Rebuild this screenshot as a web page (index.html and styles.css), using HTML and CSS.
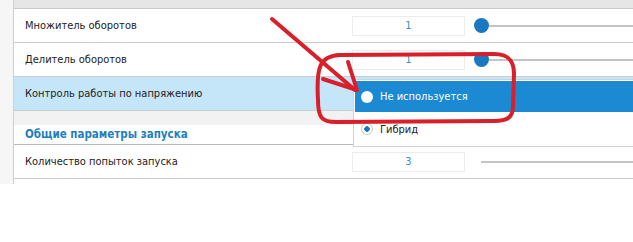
FILE: index.html
```html
<!DOCTYPE html>
<html lang="ru">
<head>
    <meta charset="UTF-8">
    <title>Параметры</title>
    <link rel="stylesheet" href="styles.css">
</head>
<body>

<div class="panel">
    <div class="gutter"></div>

    <div class="params">
        <div class="top-bar"></div>

        <div class="row">
            <div class="label">Множитель оборотов</div>
            <div class="value">1</div>
            <div class="slider"><span class="knob"></span><span class="track"></span></div>
        </div>

        <div class="row">
            <div class="label">Делитель оборотов</div>
            <div class="value">1</div>
            <div class="slider"><span class="knob"></span><span class="track"></span></div>
        </div>

        <div class="row row-active">
            <div class="label">Контроль работы по напряжению</div>
        </div>

        <div class="spacer"></div>

        <div class="group-title">Общие параметры запуска</div>

        <div class="row">
            <div class="label">Количество попыток запуска</div>
            <div class="value">3</div>
            <div class="slider slider-empty"><span class="track"></span></div>
        </div>
    </div>

    <!-- Выпадающий список для "Контроль работы по напряжению" -->
    <div class="dropdown">
        <div class="option selected"><span class="radio"></span>Не используется</div>
        <div class="option"><span class="radio checked"></span>Гибрид</div>
    </div>

    <!-- Красная пометка поверх скриншота -->
    <svg class="markup" width="633" height="242" viewBox="0 0 633 242">
        <path d="M 272 19 L 355 90" />
        <path d="M 348 62 L 357 90 L 323 79" />
        <path d="M 318 100 C 316 66, 320 56, 340 55 L 494 54 C 508 54, 514 60, 514 74 L 513 106 C 513 117, 508 121, 494 121 L 336 122 C 322 122, 318 118, 318 100 Z" />
    </svg>
</div>

</body>
</html>
```

FILE: styles.css
```css
body {
    margin: 0;
    background-color: #fff;
    font-family: 'DejaVu Sans Condensed', 'DejaVu Sans', sans-serif;
    font-size: 11px;
    color: #222;
}

.panel {
    position: relative;
    display: flex;
    height: 184px;
    overflow: hidden;
}

.gutter {
    width: 13px;
    flex-shrink: 0;
    background-color: #f6f6f6;
    border-right: 1px solid #cfcfcf;
}

.params {
    flex: 1;
    align-self: flex-start;
}

.top-bar {
    height: 8px;
    background-color: #e6e6e6;
    border-bottom: 1px solid #c9c9c9;
}

.row {
    display: grid;
    grid-template-columns: 338px 113px 1fr;
    align-items: center;
    height: 33px;
    border-bottom: 1px solid #cccccc;
}

.row-active {
    background-color: #c5e6f9;
}

.label {
    padding-left: 11px;
}

.value {
    height: 18px;
    line-height: 18px;
    border: 1px solid #ececec;
    text-align: center;
    color: #3b8bcb;
}

.slider {
    display: flex;
    align-items: center;
    padding-left: 9px;
}

.slider-empty {
    padding-left: 16px;
}

.knob {
    width: 15px;
    height: 15px;
    border-radius: 50%;
    background-color: #1a78c2;
    flex-shrink: 0;
}

.track {
    flex: 1;
    height: 2px;
    background-color: #c4c4c4;
}

.spacer {
    height: 14px;
    background-color: #f2f2f2;
}

.group-title {
    height: 19px;
    line-height: 19px;
    padding-left: 11px;
    font-size: 11.5px;
    font-weight: bold;
    color: #1d7fc2;
    border-bottom: 1px solid #b8b8b8;
}

.dropdown {
    position: absolute;
    left: 353px;
    top: 79px;
    width: 300px;
    padding: 1px 0 0 1px;
    background-color: #fff;
    border: 1px solid #d2d2d2;
}

.option {
    display: flex;
    align-items: center;
    gap: 7px;
    height: 34px;
    padding-left: 6px;
}

.option.selected {
    height: 31px;
    background-color: #1b8ad3;
    color: #fff;
}

.radio {
    width: 12px;
    height: 12px;
    border-radius: 50%;
    background-color: #fff;
    box-sizing: border-box;
}

.radio.checked {
    border: 1px solid #c9c9c9;
    background: radial-gradient(circle, #1a78c2 0 2.5px, #fff 3px);
}

.markup {
    position: absolute;
    left: 0;
    top: 0;
    fill: none;
    stroke: #d81f2a;
    stroke-width: 4;
    stroke-linecap: round;
    stroke-linejoin: round;
}
```
